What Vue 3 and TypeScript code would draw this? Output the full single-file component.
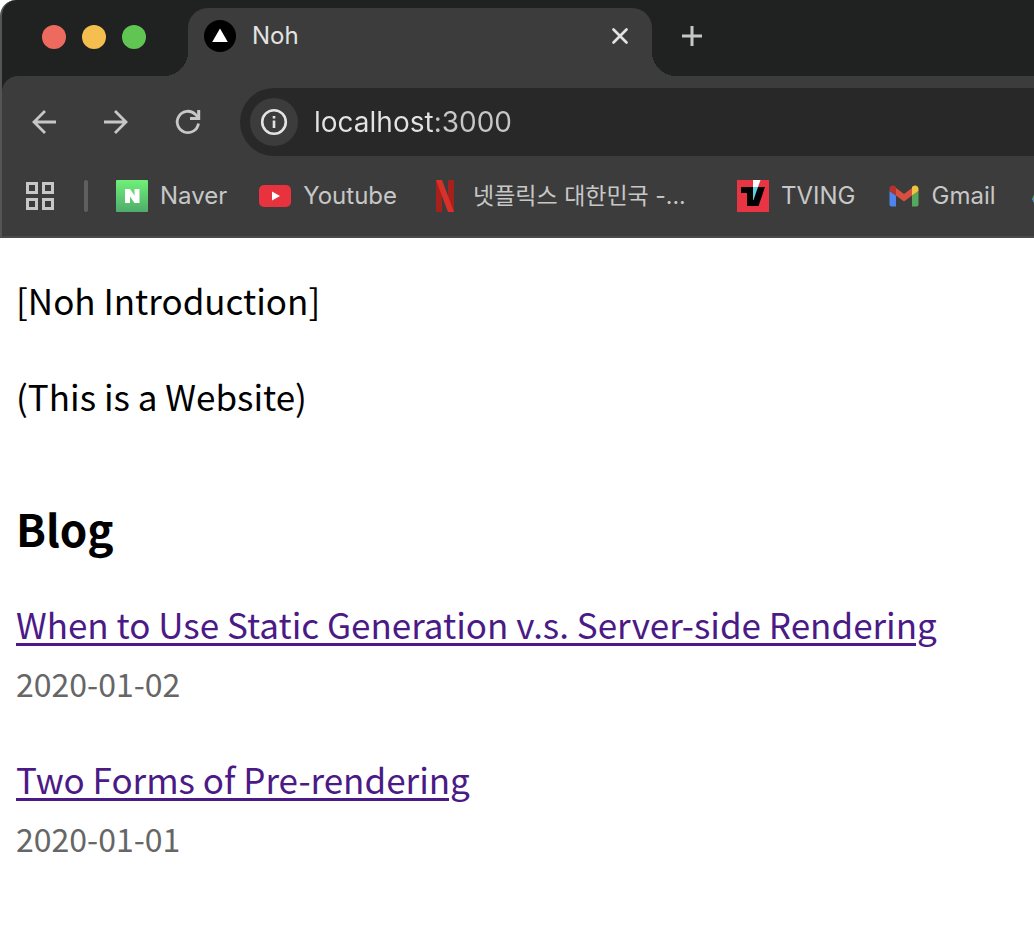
<script setup lang="ts">
import { ref } from 'vue'

interface Post {
  title: string
  date: string
}

const address = ref('localhost:3000')
const posts: Post[] = [
  { title: 'When to Use Static Generation v.s. Server-side Rendering', date: '2020-01-02' },
  { title: 'Two Forms of Pre-rendering', date: '2020-01-01' },
]
</script>

<template>
  <div class="window">
    <header class="chrome">
      <div class="tab-strip">
        <div class="lights">
          <button class="light red" aria-label="Close window"></button>
          <button class="light yellow" aria-label="Minimize window"></button>
          <button class="light green" aria-label="Zoom window"></button>
        </div>
        <div class="tab">
          <svg class="favicon" viewBox="0 0 32 32" aria-hidden="true">
            <circle cx="16" cy="16" r="16" fill="#000" />
            <path d="M16 8.500 23.800 22H8.200Z" fill="#fff" />
          </svg>
          <span class="tab-title">Noh</span>
          <button class="icon-button" aria-label="Close tab">
            <svg width="32" height="32" viewBox="0 0 32 32" aria-hidden="true">
              <path d="M9.500 9.500 22.500 22.500M22.500 9.500 9.500 22.500" stroke="#e3e3e3" stroke-width="2.700" stroke-linecap="round" />
            </svg>
          </button>
        </div>
        <button class="icon-button new-tab" aria-label="New tab">
          <svg width="32" height="32" viewBox="0 0 32 32" aria-hidden="true">
            <path d="M16 6V26M6 16H26" stroke="#c7c7c7" stroke-width="3" />
          </svg>
        </button>
      </div>

      <div class="toolbar">
        <nav class="controls">
          <button class="icon-button" aria-label="Back">
            <svg width="32" height="32" viewBox="0 0 32 32" aria-hidden="true">
              <path d="M28 16H6M17 5 6 16 17 27" fill="none" stroke="#c7c7c7" stroke-width="2.800" />
            </svg>
          </button>
          <button class="icon-button" aria-label="Forward">
            <svg width="32" height="32" viewBox="0 0 32 32" aria-hidden="true">
              <path d="M4 16H26M15 5 26 16 15 27" fill="none" stroke="#c7c7c7" stroke-width="2.800" />
            </svg>
          </button>
          <button class="icon-button" aria-label="Reload">
            <svg width="32" height="32" viewBox="0 0 32 32" aria-hidden="true">
              <path d="M26.500 17.500A10.700 10.700 0 1 1 23.500 8.400L26.500 11.500" fill="none" stroke="#c7c7c7" stroke-width="2.800" />
              <path d="M26.700 4V12.500H18" fill="none" stroke="#c7c7c7" stroke-width="3" />
            </svg>
          </button>
        </nav>
        <div class="omnibox">
          <button class="site-info" aria-label="View site information">
            <svg width="32" height="32" viewBox="0 0 32 32" aria-hidden="true">
              <circle cx="16" cy="16" r="11.800" fill="none" stroke="#e3e3e3" stroke-width="2.600" />
              <path d="M16 14.500V22M16 10V12.600" stroke="#e3e3e3" stroke-width="2.600" />
            </svg>
          </button>
          <input v-model="address" class="address" type="text" aria-label="Address" spellcheck="false" />
        </div>
      </div>

      <nav class="bookmarks" aria-label="Bookmarks">
        <button class="icon-button" aria-label="Tab groups">
          <svg width="32" height="32" viewBox="0 0 32 32" aria-hidden="true">
            <path d="M3.500 3.500h9v9h-9zM19.500 3.500h9v9h-9zM3.500 19.500h9v9h-9zM19.500 19.500h9v9h-9z" fill="none" stroke="#c7c7c7" stroke-width="3" />
          </svg>
        </button>
        <span class="divider"></span>
        <a class="bookmark" href="#naver">
          <svg width="32" height="32" viewBox="0 0 32 32" aria-hidden="true">
            <defs>
              <linearGradient id="naver" x1="0" y1="0" x2="0" y2="1">
                <stop offset="0" stop-color="#70f078" />
                <stop offset="1" stop-color="#4fac6b" />
              </linearGradient>
            </defs>
            <rect width="32" height="32" rx="1" fill="url(#naver)" />
            <path d="M9 9h5l4.500 6.500V9h5v14h-5L14 16.500V23H9Z" fill="#fff" />
          </svg>
          <span>Naver</span>
        </a>
        <a class="bookmark" href="#youtube">
          <svg width="32" height="32" viewBox="0 0 32 32" aria-hidden="true">
            <rect y="5" width="32" height="22" rx="5" fill="#e8333f" />
            <path d="M13 11.500 21 16 13 20.500Z" fill="#fff" />
          </svg>
          <span>Youtube</span>
        </a>
        <a class="bookmark" href="#netflix">
          <svg width="32" height="32" viewBox="0 0 32 32" aria-hidden="true">
            <path d="M7 0h6v32H7zM19 0h6v32h-6z" fill="#a5211c" />
            <path d="M7 0h6l12 32h-6z" fill="#d9302a" />
          </svg>
          <span class="wide">넷플릭스 대한민국 -...</span>
        </a>
        <a class="bookmark" href="#tving">
          <svg width="32" height="32" viewBox="0 0 32 32" aria-hidden="true">
            <rect width="32" height="32" fill="#e93543" />
            <path d="M4 7H28L21.500 26H10V13H4Z" fill="#000" />
            <path d="M16 7H21L16.500 20H16Z" fill="#5fd0e0" />
            <path d="M16 0H23.500L21 7H16Z" fill="#fff" />
          </svg>
          <span>TVING</span>
        </a>
        <a class="bookmark" href="#gmail">
          <svg width="32" height="32" viewBox="0 0 32 32" aria-hidden="true">
            <path d="M1.500 11 8 15.500V26.500H3.500a2 2 0 0 1-2-2Z" fill="#4f83ee" />
            <path d="M30.500 11 24 15.500V26.500H28.500a2 2 0 0 0 2-2Z" fill="#57a85c" />
            <path d="M8 8 16 14 24 8V15.500L16 21.500 8 15.500Z" fill="#d94f3f" />
            <path d="M1.500 9C1.500 5.500 5 4.500 7.500 6.500L8 7V15.500L1.500 11Z" fill="#b5332a" />
            <path d="M30.500 9C30.500 5.500 27 4.500 24.500 6.500L24 7V15.500L30.500 11Z" fill="#f3c142" />
          </svg>
          <span>Gmail</span>
        </a>
        <a class="bookmark" href="#drive" aria-label="Drive">
          <svg width="32" height="32" viewBox="0 0 32 32" aria-hidden="true">
            <path d="M11 4h10L8 27 4 19Z" fill="#55a85b" />
            <path d="M4 19h26l-5 9H9Z" fill="#4a80ee" />
            <path d="M11 4h10l9 15H20Z" fill="#f3c142" />
          </svg>
        </a>
      </nav>
    </header>

    <main class="page">
      <p>[Noh Introduction]</p>
      <p>(This is a Website)</p>
      <section>
        <h2>Blog</h2>
        <ul>
          <li v-for="post in posts" :key="post.title">
            <a :href="'#' + post.date">{{ post.title }}</a>
            <small>{{ post.date }}</small>
          </li>
        </ul>
      </section>
    </main>
  </div>
</template>

<style>
body {
  background: #fff;
  overflow-x: hidden;
}
</style>

<style scoped>
.window {
  overflow: hidden;
}

button {
  border: 0;
  padding: 0;
  background: none;
}

svg {
  display: block;
  flex: none;
}

.chrome {
  background: #202221;
  border-left: 2px solid #555;
  border-bottom: 2px solid #4a4a4a;
  border-top-left-radius: 16px;
  font-family: Inter, "Noto Sans CJK KR", sans-serif;
  font-size: 24px;
  line-height: 28px;
  color: #c7c7c7;
}

.tab-strip {
  display: flex;
  align-items: flex-end;
  height: 76px;
}

.lights {
  display: flex;
  align-items: center;
  align-self: flex-start;
  gap: 16px;
  height: 74px;
  padding: 0 42px 0 40px;
}

.light {
  width: 24px;
  height: 24px;
  border-radius: 50%;
}

.red { background: #ed6a5e; }
.yellow { background: #f5bf4f; }
.green { background: #61c554; }

.tab {
  position: relative;
  display: flex;
  align-items: center;
  box-sizing: border-box;
  width: 464px;
  height: 68px;
  padding: 0 16px 12px;
  background: #3c3c3c;
  border-radius: 20px 20px 0 0;
  color: #e3e3e3;
}

.tab::before,
.tab::after {
  content: "";
  position: absolute;
  bottom: 0;
  width: 24px;
  height: 24px;
}

.tab::before {
  right: 100%;
  background: radial-gradient(circle at 0 0, transparent 24px, #3c3c3c 24px);
}

.tab::after {
  left: 100%;
  background: radial-gradient(circle at 100% 0, transparent 24px, #3c3c3c 24px);
}

.favicon {
  width: 32px;
  height: 32px;
}

.tab-title {
  flex: 1;
  margin-left: 16px;
}

.new-tab {
  margin: 0 0 24px 24px;
}

.toolbar {
  display: flex;
  align-items: center;
  height: 68px;
  padding: 12px 0 8px 26px;
  background: #3c3c3c;
  border-top-left-radius: 16px;
}

.controls {
  display: flex;
  flex: none;
  gap: 40px;
  margin-right: 36px;
}

.omnibox {
  display: flex;
  flex: 1;
  align-items: center;
  gap: 16px;
  height: 68px;
  padding-left: 10px;
  background: #282828;
  border-radius: 34px 0 0 34px;
}

.site-info {
  display: grid;
  place-items: center;
  flex: none;
  width: 48px;
  height: 48px;
  border-radius: 50%;
  background: #3c3c3c;
}

.address {
  flex: 1;
  min-width: 0;
  padding: 0;
  border: 0;
  outline: 0;
  font: inherit;
  font-size: 28px;
  line-height: 36px;
  color: transparent;
  background: linear-gradient(to right, #e3e3e3 120px, #c7c7c7 120px);
  background-clip: text;
}

.bookmarks {
  display: flex;
  align-items: center;
  gap: 32px;
  height: 64px;
  padding: 0 0 8px 22px;
  background: #3c3c3c;
}

.divider {
  flex: none;
  width: 4px;
  height: 32px;
  margin: 0 -4px;
  border-radius: 2px;
  background: #5f5f5f;
}

.bookmark {
  display: flex;
  flex: none;
  align-items: center;
  gap: 12px;
  color: inherit;
  text-decoration: none;
  white-space: nowrap;
}

.wide {
  width: 232px;
  font-size: 23px;
}

.page {
  padding: 34px 16px;
  font-family: "Noto Sans CJK KR", "Noto Sans", sans-serif;
  font-size: 35px;
  line-height: 56px;
  color: #000;
}

p {
  margin: 0 0 40px;
}

h2 {
  margin: 72px 0 36px;
  font-size: 44px;
  line-height: 64px;
}

ul {
  margin: 0;
  padding: 0;
  list-style: none;
}

li {
  display: flex;
  flex-direction: column;
  align-items: flex-start;
  margin-bottom: 36px;
}

li a {
  color: #4b1a86;
  text-decoration-thickness: 3px;
  text-underline-offset: 4px;
}

small {
  font-size: 32px;
  line-height: 63px;
  color: #666;
}
</style>
